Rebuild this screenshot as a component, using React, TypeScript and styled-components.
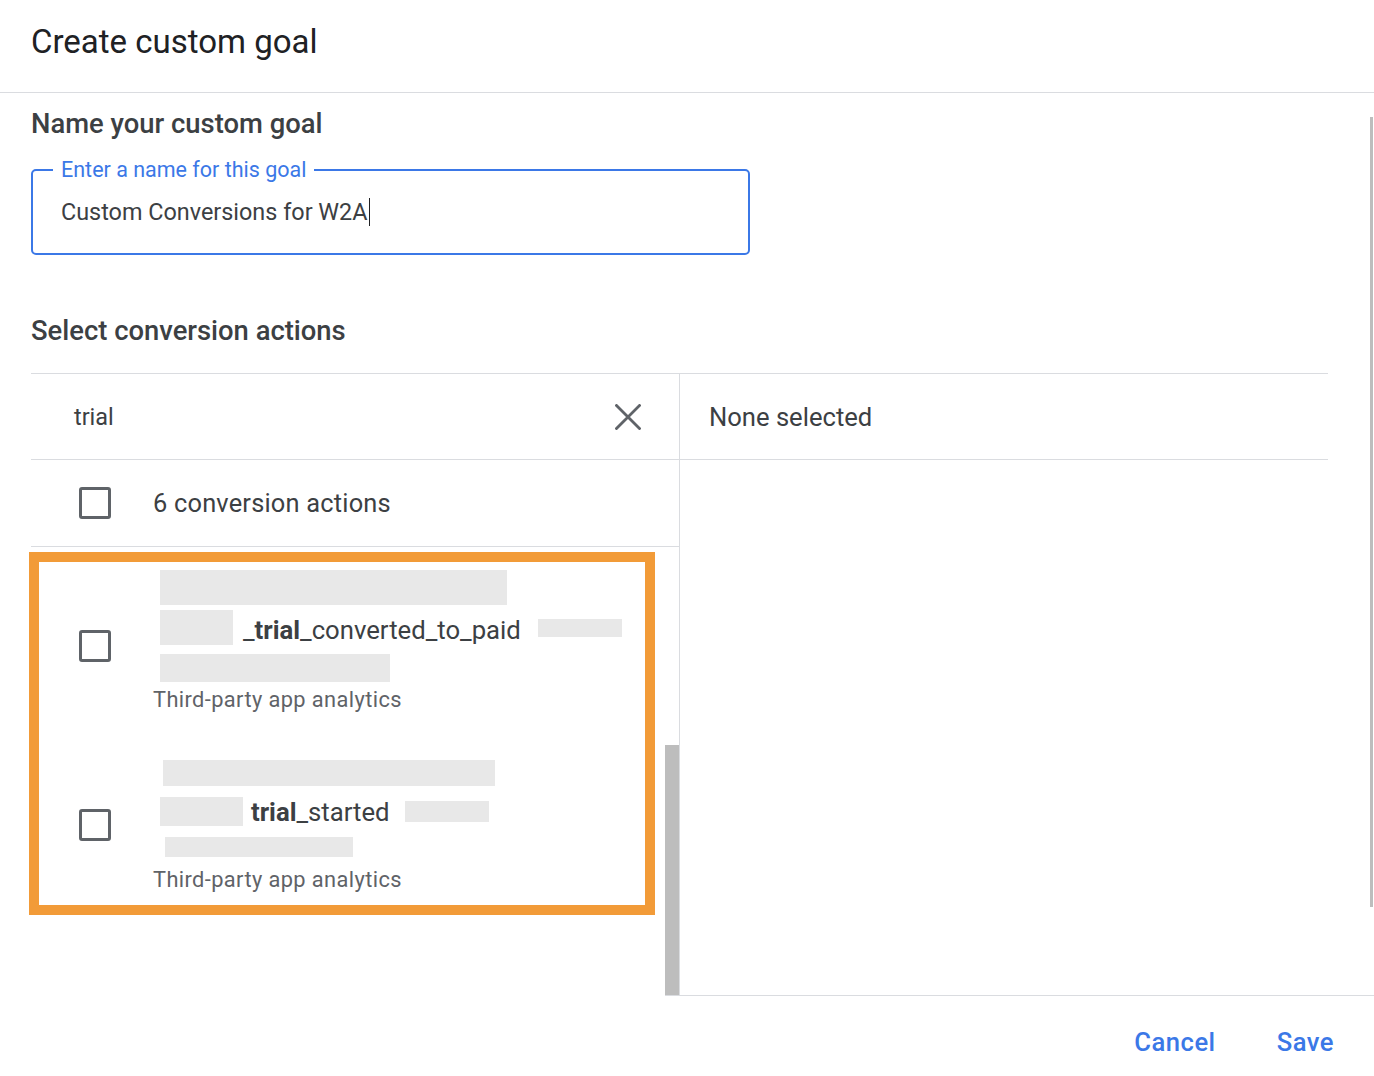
import React from 'react';
import styled, { createGlobalStyle } from 'styled-components';

const GlobalStyle = createGlobalStyle`
  html, body {
    margin: 0;
    padding: 0;
    background: #fff;
  }
  body {
    font-family: Roboto, 'Noto Sans', Arial, sans-serif;
    color: #3c4043;
  }
  * {
    box-sizing: border-box;
  }
`;

const Dialog = styled.div`
  width: 1374px;
  height: 1076px;
  display: flex;
  flex-direction: column;
  overflow: hidden;
  background: #fff;
`;

const Header = styled.header`
  height: 93px;
  flex: none;
  padding: 22px 31px 0;
  border-bottom: 1px solid #dadce0;
`;

const Title = styled.h1`
  margin: 0;
  font-size: 33px;
  line-height: 40px;
  font-weight: 400;
  color: #202124;
`;

const Body = styled.div`
  height: 902px;
  flex: none;
  display: flex;
`;

const Content = styled.div`
  flex: 1;
  display: flex;
  flex-direction: column;
  padding: 16px 42px 0 31px;
  min-width: 0;
`;

const ScrollTrack = styled.div<{ top: number; width: number }>`
  flex: none;
  width: ${p => p.width}px;
  padding-top: ${p => p.top}px;
  display: flex;
  flex-direction: column;
`;

const ScrollThumb = styled.div<{ height?: number }>`
  background: #bdbdbd;
  ${p => (p.height ? `height: ${p.height}px;` : 'flex: 1;')}
`;

const SectionTitle = styled.h2<{ mt?: number }>`
  margin: ${p => p.mt || 0}px 0 0;
  font-size: 27.4px;
  line-height: 30px;
  font-weight: 500;
  color: #3c4043;
`;

const Field = styled.fieldset`
  margin: 19px 0 0;
  width: 719px;
  padding: 0 20px 27px;
  border: 2px solid #3b78e7;
  border-radius: 5px;
`;

const FieldLabel = styled.legend`
  padding: 0 8px;
  font-size: 21.5px;
  line-height: 24px;
  color: #3b78e7;
`;

const FieldValue = styled.div`
  margin: 16px 0 0 8px;
  font-size: 23.4px;
  line-height: 24px;
  color: #3c4043;
`;

const Caret = styled.span`
  display: inline-block;
  width: 1.5px;
  height: 28px;
  margin-left: 1px;
  vertical-align: -6px;
  background: #202124;
`;

const Table = styled.div`
  margin-top: 27px;
  flex: 1;
  display: grid;
  grid-template-columns: 648px 1fr;
  grid-template-rows: 86px 1fr;
  border-top: 1px solid #dadce0;
  min-height: 0;
`;

const SearchCell = styled.div`
  display: flex;
  align-items: center;
  justify-content: space-between;
  padding: 0 38px 0 43px;
  border-bottom: 1px solid #dadce0;
  font-size: 23.4px;
  color: #3c4043;
`;

const SelectedHeader = styled.div`
  display: flex;
  align-items: center;
  padding-left: 29px;
  border-left: 1px solid #dadce0;
  border-bottom: 1px solid #dadce0;
  font-size: 25.6px;
  color: #3c4043;
`;

const LeftPane = styled.div`
  display: flex;
  flex-direction: column;
  min-height: 0;
`;

const RightPane = styled.div`
  border-left: 1px solid #dadce0;
`;

const AllRow = styled.div`
  height: 87px;
  flex: none;
  display: flex;
  align-items: center;
  gap: 42px;
  padding-left: 48px;
  border-bottom: 1px solid #dadce0;
  font-size: 25.4px;
  letter-spacing: 0.2px;
  color: #3c4043;
`;

const Checkbox = styled.span<{ mt?: number }>`
  flex: none;
  width: 32px;
  height: 32px;
  border: 3px solid #5f6368;
  border-radius: 3px;
  ${p => (p.mt !== undefined ? `margin-top: ${p.mt}px;` : '')}
`;

const ListArea = styled.div`
  flex: 1;
  display: flex;
  min-height: 0;
`;

const ListContent = styled.div`
  flex: 1;
  padding-top: 5px;
`;

const Highlight = styled.div`
  margin-left: -2px;
  width: 626px;
  border: 10px solid #f29b38;
  padding: 8px 0 13px;
`;

const Item = styled.div<{ gapAfter?: number }>`
  display: flex;
  align-items: flex-start;
  gap: 42px;
  padding-left: 40px;
  margin-bottom: ${p => p.gapAfter || 0}px;
`;

const ItemBody = styled.div`
  display: flex;
  flex-direction: column;
`;

const Line = styled.div<{ mt?: number }>`
  display: flex;
  align-items: center;
  margin-top: ${p => p.mt || 0}px;
`;

const Redact = styled.span<{ w: number; h: number; ml?: number }>`
  flex: none;
  display: block;
  width: ${p => p.w}px;
  height: ${p => p.h}px;
  margin-left: ${p => p.ml || 0}px;
  background: #e8e8e8;
`;

const ActionName = styled.span<{ ml?: number; drop?: number }>`
  margin-left: ${p => p.ml || 0}px;
  padding-top: ${p => p.drop || 0}px;
  font-size: 25.7px;
  line-height: 28px;
  color: #3c4043;
  white-space: nowrap;

  b {
    font-weight: 700;
    color: #3c4043;
  }
`;

const Source = styled.div<{ mt?: number }>`
  margin-top: ${p => p.mt || 0}px;
  font-size: 21.8px;
  line-height: 24px;
  letter-spacing: 0.4px;
  color: #5f6368;
`;

const Footer = styled.footer`
  flex: 1;
  display: flex;
  justify-content: flex-end;
  align-items: flex-start;
  gap: 61px;
  padding: 35px 40px 0 0;
  background-image: linear-gradient(#dadce0, #dadce0);
  background-size: calc(100% - 665px) 1px;
  background-position: right top;
  background-repeat: no-repeat;
`;

const TextButton = styled.button`
  border: none;
  background: none;
  padding: 0;
  font-family: Roboto, 'Noto Sans', Arial, sans-serif;
  font-size: 25.6px;
  line-height: 24px;
  font-weight: 500;
  letter-spacing: 0.5px;
  color: #3b78e7;
  cursor: pointer;
`;

const CloseIcon = () => (
  <svg width="26" height="26" viewBox="0 0 26 26" aria-hidden="true">
    <path d="M1.5 1.5 L24.5 24.5 M24.5 1.5 L1.5 24.5" stroke="#5f6368" strokeWidth="2.8" strokeLinecap="square" fill="none" />
  </svg>
);

export const App: React.FC = () => (
  <>
    <GlobalStyle />
    <Dialog>
      <Header>
        <Title>Create custom goal</Title>
      </Header>

      <Body>
        <Content>
          <SectionTitle>Name your custom goal</SectionTitle>
          <Field>
            <FieldLabel>Enter a name for this goal</FieldLabel>
            <FieldValue>
              Custom Conversions for W2A
              <Caret />
            </FieldValue>
          </Field>

          <SectionTitle mt={61}>Select conversion actions</SectionTitle>

          <Table>
            <SearchCell>
              <span>trial</span>
              <CloseIcon />
            </SearchCell>
            <SelectedHeader>None selected</SelectedHeader>

            <LeftPane>
              <AllRow>
                <Checkbox />
                <span>6 conversion actions</span>
              </AllRow>
              <ListArea>
                <ListContent>
                  <Highlight>
                    <Item gapAfter={48}>
                      <Checkbox mt={60} />
                      <ItemBody>
                        <Line>
                          <Redact w={347} h={35} ml={7} />
                        </Line>
                        <Line mt={5}>
                          <Redact w={73} h={35} ml={7} />
                          <ActionName ml={10} drop={4}>
                            _<b>trial</b>_converted_to_paid
                          </ActionName>
                          <Redact w={84} h={18} ml={17} />
                        </Line>
                        <Line mt={9}>
                          <Redact w={230} h={28} ml={7} />
                        </Line>
                        <Source mt={6}>Third-party app analytics</Source>
                      </ItemBody>
                    </Item>

                    <Item>
                      <Checkbox mt={49} />
                      <ItemBody>
                        <Line>
                          <Redact w={332} h={26} ml={10} />
                        </Line>
                        <Line mt={11}>
                          <Redact w={83} h={29} ml={7} />
                          <ActionName ml={8}>
                            <b>trial</b>_started
                          </ActionName>
                          <Redact w={84} h={21} ml={15} />
                        </Line>
                        <Line mt={11}>
                          <Redact w={188} h={20} ml={12} />
                        </Line>
                        <Source mt={11}>Third-party app analytics</Source>
                      </ItemBody>
                    </Item>
                  </Highlight>
                </ListContent>
                <ScrollTrack top={198} width={14}>
                  <ScrollThumb />
                </ScrollTrack>
              </ListArea>
            </LeftPane>
            <RightPane />
          </Table>
        </Content>
        <ScrollTrack top={24} width={4}>
          <ScrollThumb height={790} style={{ width: 3 }} />
        </ScrollTrack>
      </Body>

      <Footer>
        <TextButton>Cancel</TextButton>
        <TextButton>Save</TextButton>
      </Footer>
    </Dialog>
  </>
);

export default App;
